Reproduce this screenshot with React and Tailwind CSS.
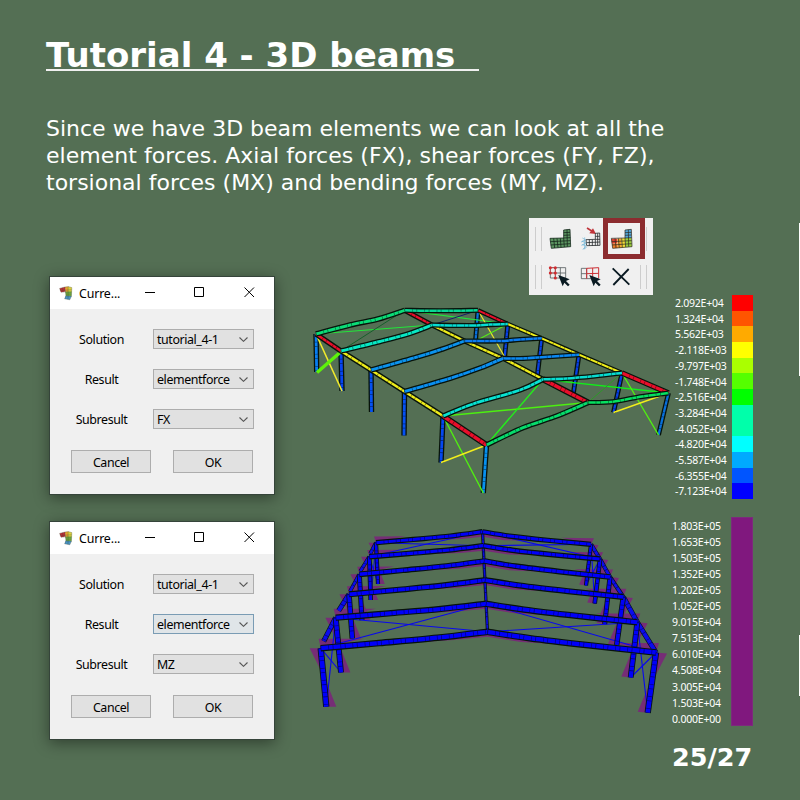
import React from "react";

const p = (pts) => "M" + pts.map((q) => q.join(",")).join("L");

// Catmull-Rom curve through the points, used for the bent rafters
const curve = (pts) => {
  if (pts.length < 3) return p(pts);
  let d = "M" + pts[0].join(",");
  for (let i = 0; i < pts.length - 1; i++) {
    const a = pts[i - 1] || pts[i];
    const b = pts[i];
    const c = pts[i + 1];
    const e = pts[i + 2] || c;
    d += `C${b[0] + (c[0] - a[0]) / 6},${b[1] + (c[1] - a[1]) / 6} ${c[0] - (e[0] - b[0]) / 6},${c[1] - (e[1] - b[1]) / 6} ${c.join(",")}`;
  }
  return d;
};

function Beam({ pts, c, w = 3.4, o = 2.6 }) {
  const d = curve(pts);
  return (
    <g fill="none">
      <path d={d} stroke="#07130b" strokeWidth={w + o} />
      <path d={d} stroke={c} strokeWidth={w} />
      <path d={d} stroke="#000" strokeWidth={w} strokeOpacity=".45" strokeDasharray=".8 7 .7 3.6" />
    </g>
  );
}

/* ---------- axial force frame ---------- */
const A = [[316, 334], [341, 351], [371, 370], [404.5, 391.5], [443, 416], [486.5, 445]];
const AB = [[316.7, 372], [342, 391], [371.5, 412], [404, 435.5], [441, 462.5], [483.3, 493]];
const R = [[404.5, 310.3], [432, 325], [464.5, 341], [503, 358.3], [543, 379.3], [588, 402.5]];
const B = [[478, 310.3], [507.8, 324], [541.7, 338.3], [579, 354.7], [622, 373], [668.5, 393]];
const BB = [[475.5, 341], [504.7, 357], [537.3, 376], [573.3, 394], [613.5, 412.5], [658.5, 435]];
const LEFT_MID = [
  [[350, 325], [378, 319]], [[380, 341.5], [410, 333.3]], [[416.7, 357.2], [443, 348.8]],
  [[450, 378.3], [480, 368]], [[473, 404], [520, 390]], [[523, 427.7], [556.7, 416]],
];
const RIGHT_MID = [
  [[440, 310.7]], [[470, 325.5], [490, 324.6]], [[500, 341], [520, 339.5]],
  [[520, 358.5], [545, 357]], [[566.7, 378.5], [595, 376]], [[613, 401.7], [640, 396.7]],
];
const LC = ["#0bdc77", "#08e8c4", "#0b93ee", "#0a90f2", "#08e3d2", "#07dc6c"];
const RC = ["#08d896", "#07ddd4", "#0b7cf2", "#0a88f2", "#08dcd0", "#06e060"];
const COL = ["#087df0", "#0544f2", "#0452f4", "#0450f4", "#0448f2", "#0791f0"];
const BAY = ["#e80f2b", "#f0ee1c", "#f0ee1c", "#f0ee1c", "#e80f2b"];

function AxialFrame() {
  const t = (a, b, c, w = 1.2) => <path d={p([a, b])} stroke={c} strokeWidth={w} />;
  return (
    <svg className="block h-[209px] w-[384px] shrink-0" viewBox="290 295 384 209">
      {B.map((b, i) => <Beam key={i} pts={[b, BB[i]]} c={i === 5 || i === 0 ? "#0870dc" : "#0840e6"} w={2.3} />)}
      {t(A[0], R[1], "#22e63a")}
      {t(A[1], R[0], "#15602a", 1)}
      {t(R[0], B[1], "#22e63a")}
      {t(R[1], B[0], "#10206a", 1)}
      {t(B[0], BB[1], "#eee82a")}
      {t(B[1], BB[0], "#55ea18")}
      {t(A[4], R[5], "#4cf010", 1.4)}
      {t(A[5], R[4], "#22f01a", 1.4)}
      {t(R[4], B[5], "#10f018", 1.3)}
      {t(R[5], B[4], "#2c9a26", 1)}
      {t(B[4], BB[5], "#50f010", 1.4)}
      {t(BB[4], B[5], "#f2ee1c", 1.4)}
      {A.map((a, i) => <Beam key={i} pts={[a, AB[i]]} c={COL[i]} w={2.8} />)}
      {t(A[0], AB[1], "#f0ea2c", 1.6)}
      <path d={p([[340, 352.5], [317, 372.5]])} stroke="#5df20a" strokeWidth="3.4" />
      {t(A[4], AB[5], "#50f010", 1.4)}
      {t(AB[4], A[5], "#f2ee1c", 1.6)}
      {BAY.map((c, i) => <Beam key={i} pts={[B[i], B[i + 1]]} c={c} w={i === 4 ? 3 : 2} />)}
      {BAY.map((c, i) => <Beam key={i} pts={[R[i], R[i + 1]]} c={c} w={i === 4 ? 3.6 : 2.4} />)}
      {BAY.map((c, i) => <Beam key={i} pts={[A[i], A[i + 1]]} c={c} w={i === 4 ? 3.6 : 2.6} />)}
      {A.map((a, i) => (
        <g key={i}>
          <Beam pts={[R[i], ...RIGHT_MID[i], B[i]]} c={RC[i]} w={2.5} />
          <Beam pts={[a, ...LEFT_MID[i], R[i]]} c={LC[i]} w={2.9} />
        </g>
      ))}
    </svg>
  );
}

/* ---------- bending moment frame ---------- */
const L2 = [[376, 542.7], [369.3, 556.7], [359.3, 574.3], [349, 594.3], [335.7, 617.7], [320.7, 648.2]];
const LB2 = [[378, 584], [370.7, 600], [362, 620], [352.3, 638.5], [341, 672.5], [326.3, 706.7]];
const M2 = [[482.5, 531.7], [483.3, 545.7], [484, 561], [485, 580], [486, 603.7], [487.5, 631.8]];
const R2 = [[591, 544.3], [600, 559], [610, 577], [623.3, 597], [637.3, 622.3], [656, 652.5]];
const RB2 = [[586, 585.5], [594.7, 603.5], [604.7, 624], [616.7, 645], [630.7, 677.5], [647.7, 712.8]];

function MomentFrame() {
  const t = (a, b) => <path d={p([a, b])} stroke="#0808ee" strokeWidth="1.1" />;
  const mid = (a, b, f, s) => [a[0] + (b[0] - a[0]) * f, a[1] + (b[1] - a[1]) * f + s];
  return (
    <svg className="block h-[209px] w-[384px] shrink-0" viewBox="290 517 384 209">
      {L2.map((l, i) => {
        const k = 0.68 + i * 0.064;
        const r = R2[i];
        return (
          <g key={i} fill="#762d76">
            <path d={p([[l[0] - 2, l[1] - 10.5 * k + 1], [l[0] + 43 * k, l[1] - 9.5 * k], l])} />
            <path d={p([[l[0] - 11 * k, l[1]], l, [l[0] + 1, l[1] + 24 * k]])} />
            <path d={p([LB2[i], [LB2[i][0] + 10 * k, LB2[i][1]], [LB2[i][0], LB2[i][1] - 25 * k]])} />
            <path d={p([[r[0] + 3, r[1] - 10.5 * k + 1], [r[0] - 44 * k, r[1] - 9.5 * k], r])} />
            <path d={p([[r[0] + 11 * k, r[1] + 1], r, [r[0] - 1, r[1] + 24 * k]])} />
            <path d={p([RB2[i], [RB2[i][0] - 10 * k, RB2[i][1] - 1], [RB2[i][0], RB2[i][1] - 25 * k]])} />
            <path d={p([mid(l, M2[i], 0.5, 3), mid(l, M2[i], 0.8, 5), [M2[i][0], M2[i][1] + 5], mid(M2[i], r, 0.2, 6), mid(M2[i], r, 0.5, 3), M2[i]])} />
          </g>
        );
      })}
      {[0, 1, 2, 3, 4].map((i) => {
        const l = [L2[i + 1][0] + (i > 2 ? 3 : 1), L2[i + 1][1] - (i > 2 ? 7 : 3)];
        return (
          <g key={i}>
            <Beam pts={[L2[i], l]} c="#0c0cec" w={i > 2 ? 4 : 2.6} o={1.2} />
            <Beam pts={[R2[i], R2[i + 1]]} c="#0c0cec" w={i > 2 ? 4 : 3} o={1.2} />
          </g>
        );
      })}
      {t(L2[0], M2[1])}{t(L2[1], M2[0])}{t(M2[0], R2[1])}{t(M2[1], R2[0])}
      {t(L2[4], M2[5])}{t(L2[5], M2[4])}{t(M2[4], R2[5])}{t(M2[5], R2[4])}
      {t(L2[0], LB2[1])}{t(L2[1], LB2[0])}{t(R2[0], RB2[1])}{t(R2[1], RB2[0])}
      {t(L2[4], LB2[5])}{t(L2[5], LB2[4])}{t(R2[4], RB2[5])}{t(R2[5], RB2[4])}
      <Beam pts={[M2[0], M2[5]]} c="#0a0ae0" w={1.8} o={1.4} />
      {L2.map((l, i) => {
        const w = 2.6 + i * 0.42;
        return (
          <g key={i}>
            <Beam pts={[l, LB2[i]]} c="#0000fa" w={w} o={1.6} />
            <Beam pts={[R2[i], RB2[i]]} c="#0000fa" w={w} o={1.6} />
            <Beam pts={[l, mid(l, M2[i], 0.35, 0.6), mid(l, M2[i], 0.7, 1), M2[i]]} c="#0000fa" w={2.9 + i * 0.28} o={2.3} />
            <Beam pts={[M2[i], mid(M2[i], R2[i], 0.25, 1.2), mid(M2[i], R2[i], 0.6, 1), R2[i]]} c="#0000fa" w={2.9 + i * 0.28} o={2.3} />
          </g>
        );
      })}
    </svg>
  );
}

/* ---------- dialogs ---------- */
function AppIcon() {
  return (
    <svg className="h-[15px] w-[14px]" viewBox="0 0 14 15">
      <path d="M.6 2.4L6 1L6.6 5.6L2 6.2Z" fill="#bd3038" />
      <path d="M6 1L9.6 .6L9.8 6.4L6.6 5.8Z" fill="#e8a22e" />
      <path d="M9 .7L12.8 1.6L12.6 6L9 6.4Z" fill="#dcd03c" />
      <path d="M6.4 5.8L12.6 5.6L12.4 10.6L7 10Z" fill="#74b040" />
      <path d="M6.6 9.8L12.4 10L10.8 13.8L5.6 12.8Z" fill="#4a94c4" />
      <path d="M.6 2.4L6 1L9.6 .6L12.8 1.6L12.4 10.4L10.8 13.8L5.6 12.8L7 10L6.6 5.8L2 6.2ZM1.4 4.4L12.6 3.8M6.6 6L12.6 6.1M6.8 8.1H12.4M6.6 9.8L12.4 10.2M3.4 1.7L4.3 6.1M6 1L6.6 6.4M9.2 .8L9 13.2" fill="none" stroke="#38402c" strokeOpacity=".5" strokeWidth=".6" />
    </svg>
  );
}

function Row({ label, value, active }) {
  return (
    <div className="flex h-5 items-center">
      <div className="w-[103px] pt-[2px] text-center">{label}</div>
      <div className={"flex h-5 w-[101px] items-center justify-between border pr-[5px] pl-[3px] " + (active ? "border-[#7a9cb4] bg-[#e0e5e8]" : "border-[#adadad] bg-[#e1e1e1]")}>
        <span className="pt-[2px] whitespace-nowrap">{value}</span>
        <svg className="h-[5px] w-[9px] shrink-0" viewBox="0 0 9 5"><path d="M.5 .5L4.5 4.3L8.5 .5" fill="none" stroke="#555" strokeWidth="1.1" /></svg>
      </div>
    </div>
  );
}

function Dialog({ sub, active }) {
  return (
    <div className="h-[219px] w-[226px] border border-[#35443a] bg-[#f0f0f0] font-['Noto_Sans',sans-serif] text-[12.4px] leading-[18px] tracking-[-0.4px] text-black shadow-[0_3px_14px_rgba(0,0,0,0.42)]">
      <div className="flex h-8 items-center bg-white pl-[9px]">
        <AppIcon />
        <span className="ml-[6px] w-[66px] pt-px tracking-[-0.15px]">Curre...</span>
        <svg className="-mt-[2px] h-[11px] w-[111px]" viewBox="0 0 111 11" fill="none" stroke="#000">
          <path d="M0 5.5H10M49.5 .5H58.5V9.5H49.5ZM99.5 .5L109 10M109 .5L99.5 10" />
        </svg>
      </div>
      <div className="flex flex-col gap-5 pt-5">
        <Row label="Solution" value="tutorial_4-1" />
        <Row label="Result" value="elementforce" active={active} />
        <Row label="Subresult" value={sub} />
      </div>
      <div className="mt-[21px] flex gap-[22px] pl-[21px]">
        <div className="flex h-[23px] w-20 items-center justify-center border border-[#adadad] bg-[#e1e1e1] pt-[2px]">Cancel</div>
        <div className="flex h-[23px] w-20 items-center justify-center border border-[#adadad] bg-[#e1e1e1] pt-[2px]">OK</div>
      </div>
    </div>
  );
}

/* ---------- toolbar ---------- */
const MESH = "M90 85L131 84L131 60L150 58L152 110L94 115ZM91 95L151 92M92 105L151 101M101 85L104 114M111 85L114 113M121 85L123 112M131 84L133 111M141 59L142 110M131 68L150 67M131 76L150 75M131 84L151 83";

function Sep() {
  return <div className="h-6 w-px bg-[#cdcdcd]" />;
}

function Cursor({ x, y }) {
  return <path transform={`translate(${x} ${y})`} d="M0 0L34 13L23 18L34 29L29 34L18 23L13 34Z" fill="#0a1a22" />;
}

function Toolbar() {
  return (
    <div className="ml-[239px] flex h-[77px] w-[124px] flex-col bg-[#f0f0f0]">
      <div className="flex h-[41px]">
        <div className="flex w-[15px] gap-[5px] pt-[9px] pl-[6px]"><Sep /><Sep /></div>
        <svg className="h-[41px] w-8" viewBox="72 24 96 123">
          <path d="M90 85L131 84L131 60L150 58L152 110L94 115Z" fill="#5b9460" />
          <path d={MESH} fill="none" stroke="#14241a" strokeWidth="2.3" />
        </svg>
        <svg className="h-[41px] w-[27px]" viewBox="168 24 81 123" fill="none">
          <path d="M201 54L220 66" stroke="#c0343a" strokeWidth="5" />
          <path d="M228 72L208 70L219 55Z" fill="#c0343a" />
          <path d="M198 89L226 88L226 70L239 69L240 106L200 107ZM199 98L240 96M208 89V107M217 89V107M226 88V107M233 70V106M226 79H239M226 88H240" stroke="#26292c" strokeWidth="2.4" />
          <path d="M187 84L198 90L186 94L199 99L187 104L199 108L190 116M194 82V118M183 96L194 92M184 106L194 102M188 118L200 112" stroke="#7dbbd8" strokeWidth="2.2" />
        </svg>
        <div className="h-[41px] w-[42px] border-[5px] border-[#8c2c2f]">
          <svg className="block h-[31px] w-8" viewBox="264 39 96 93">
            <path d="M274 86L292 86L292 100L276 101Z" fill="#df402e" />
            <path d="M276 101L292 100L294 114L278 115Z" fill="#ef7d24" />
            <path d="M292 86L304 85L306 113L294 114Z" fill="#f4a72a" />
            <path d="M304 85L315 84L317 112L306 113Z" fill="#f0dc35" />
            <path d="M315 84L334 83L336 110L317 112Z" fill="#9bcf3e" />
            <path d="M315 60L334 58L334 84L315 84Z" fill="#52a8dc" />
            <path transform="translate(184 0)" d={MESH} fill="none" stroke="#2c2a20" strokeWidth="2.1" />
          </svg>
        </div>
        <div className="pt-[9px] pl-px"><Sep /></div>
      </div>
      <div className="flex h-9">
        <div className="flex w-[15px] gap-[5px] pt-[6px] pl-[6px]"><Sep /><Sep /></div>
        <svg className="h-9 w-8" viewBox="72 147 96 108" fill="none">
          <path d="M91 173H137V204H91ZM91 189H137M106 173V204M121 173V204" stroke="#53595c" strokeWidth="2.4" />
          <path d="M91 173H106V204M91 173V189H106" stroke="#c0393c" strokeWidth="2" />
          <g fill="#d02c30"><circle cx="91" cy="173" r="4.5" /><circle cx="106" cy="173" r="4.5" /><circle cx="91" cy="189" r="4.5" /><circle cx="106" cy="189" r="4.5" /><circle cx="106" cy="204" r="4.5" /></g>
          <Cursor x={115} y={195} />
        </svg>
        <svg className="h-9 w-8" viewBox="168 147 96 108" fill="none">
          <path d="M184 175H200V206H184ZM184 191H200M200 206H236" stroke="#53595c" strokeWidth="2.4" />
          <path d="M200 175L236 173V204M200 175V191L236 190M218 174V204M200 191V206" stroke="#cb3035" strokeWidth="3" />
          <Cursor x={208} y={195} />
        </svg>
        <svg className="h-9 w-[30px]" viewBox="264 147 90 108" fill="none">
          <path d="M278 175L328 224M326 177L280 225" stroke="#0a1a22" strokeWidth="5.5" />
        </svg>
        <div className="flex gap-[5px] pt-[6px] pl-[2px]"><Sep /><Sep /></div>
      </div>
    </div>
  );
}

const LEG1 = [
  ["2.092E+04", "#ff0000"], ["1.324E+04", "#ff5500"], ["5.562E+03", "#ffaa00"], ["-2.118E+03", "#ffff00"],
  ["-9.797E+03", "#aaff00"], ["-1.748E+04", "#55ff00"], ["-2.516E+04", "#00ff00"], ["-3.284E+04", "#00ffaa"],
  ["-4.052E+04", "#00ffaa"], ["-4.820E+04", "#00ffff"], ["-5.587E+04", "#00aaff"], ["-6.355E+04", "#0055ff"],
  ["-7.123E+04", "#0000ff"],
];
const LEG2 = ["1.803E+05", "1.653E+05", "1.503E+05", "1.352E+05", "1.202E+05", "1.052E+05", "9.015E+04", "7.513E+04", "6.010E+04", "4.508E+04", "3.005E+04", "1.503E+04", "0.000E+00"];

export default function App() {
  return (
    <main className="flex h-[800px] w-[800px] flex-col overflow-hidden bg-[#546f54] font-['DejaVu_Sans',sans-serif] text-white">
      <h1 className="mt-[34px] ml-[46px] h-[37px] w-[433px] border-b-2 border-[#f0f0f0] text-[34px] leading-[43px] font-bold whitespace-nowrap">Tutorial 4 - 3D beams</h1>
      <p className="mt-[44px] ml-[46px] h-[103px] text-[22px] leading-[27px] whitespace-nowrap">
        Since we have 3D beam elements we can look at all the<br />
        <span className="tracking-[0.04px]">element forces. Axial forces (FX), shear forces (FY, FZ),</span><br />
        torsional forces (MX) and bending forces (MY, MZ).
      </p>
      <div className="flex">
        <section className="flex w-[290px] shrink-0 flex-col gap-[26px] pt-[58px] pl-[49px]">
          <Dialog sub="FX" />
          <Dialog sub="MZ" active />
        </section>
        <section className="w-[509px] shrink-0">
          <Toolbar />
          <div className="flex h-[222px]">
            <AxialFrame />
            <div className="flex h-[204px] w-[79px] flex-col font-['Noto_Sans',sans-serif] text-[10.5px] tracking-[-0.25px]">
              {LEG1.map(([t, c]) => (
                <div key={t} className="flex flex-1 items-center justify-between leading-none">
                  <span className="pt-px pl-px">{t}</span>
                  <span className="h-full w-[21px]" style={{ background: c }} />
                </div>
              ))}
            </div>
          </div>
          <div className="flex h-[209px]">
            <MomentFrame />
            <div className="-ml-[2px] flex w-[81px] justify-between font-['Noto_Sans',sans-serif] text-[10.5px] tracking-[-0.2px]">
              <div className="flex flex-col">
                {LEG2.map((t) => <span key={t} className="flex flex-1 items-center pt-[2px] leading-none">{t}</span>)}
              </div>
              <div className="w-[22px] border border-[#7c2a7c] bg-[#80187e]" />
            </div>
          </div>
          <div className="mt-[15px] ml-[382px] text-[25.5px] leading-[32px] font-bold">25/27</div>
        </section>
        <aside className="flex w-px shrink-0 flex-col gap-[259px] pt-[5px]">
          <div className="h-[153px] bg-white" />
          <div className="h-[61px] bg-white" />
        </aside>
      </div>
    </main>
  );
}
